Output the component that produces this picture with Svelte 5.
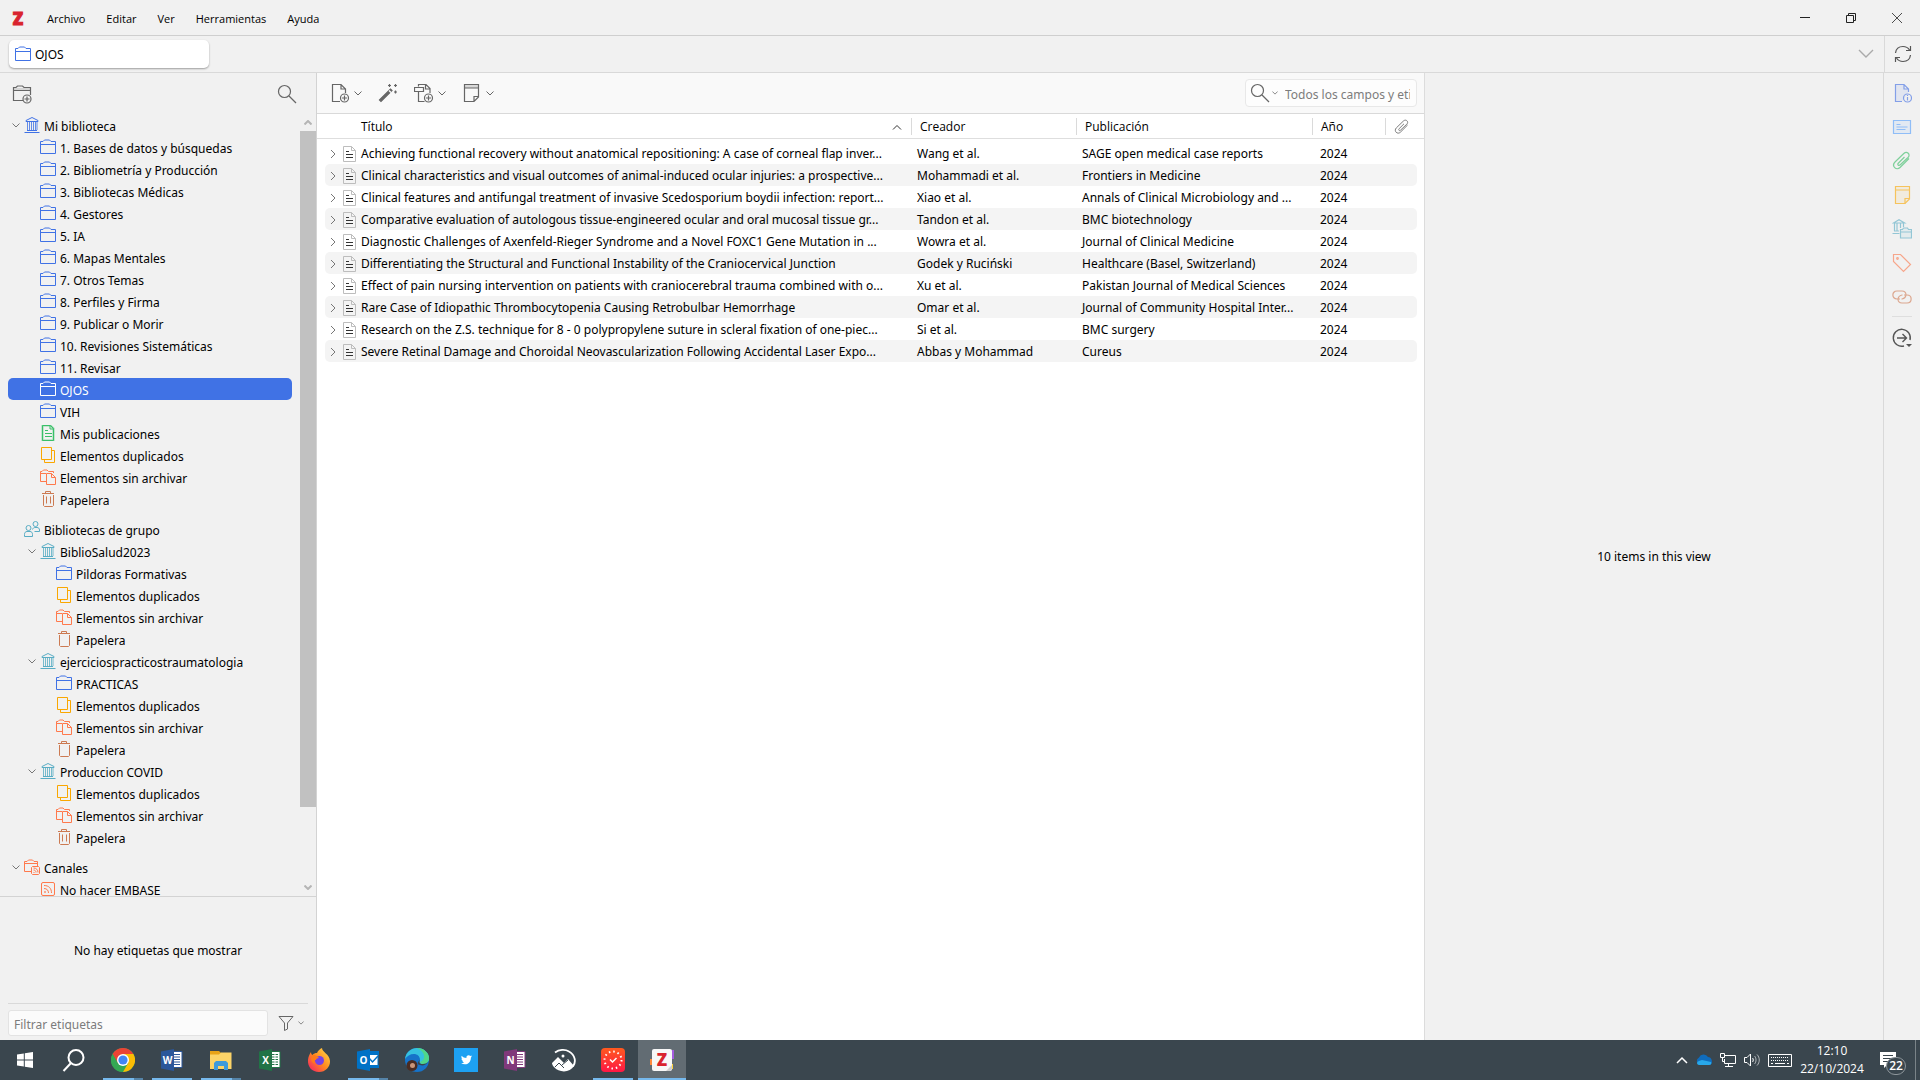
<script>
  const menus = ['Archivo', 'Editar', 'Ver', 'Herramientas', 'Ayuda'];

  const folder = (label, level = 1) => ({ label, level, icon: 'folder' });
  const extras = (level, trash = 'trash') => [
    { label: 'Elementos duplicados', level, icon: 'duplicates' },
    { label: 'Elementos sin archivar', level, icon: 'unfiled' },
    { label: 'Papelera', level, icon: trash },
  ];

  const tree = [
    { label: 'Mi biblioteca', level: 0, icon: 'library', tone: 'blue', open: true },
    folder('1. Bases de datos y búsquedas'),
    folder('2. Bibliometría y Producción'),
    folder('3. Bibliotecas Médicas'),
    folder('4. Gestores'),
    folder('5. IA'),
    folder('6. Mapas Mentales'),
    folder('7. Otros Temas'),
    folder('8. Perfiles y Firma'),
    folder('9. Publicar o Morir'),
    folder('10. Revisiones Sistemáticas'),
    folder('11. Revisar'),
    folder('OJOS'),
    folder('VIH'),
    { label: 'Mis publicaciones', level: 1, icon: 'publications' },
    ...extras(1, 'trash-full'),
    { label: 'Bibliotecas de grupo', level: 0, icon: 'groups', spaced: true },
    { label: 'BiblioSalud2023', level: 1, icon: 'library', open: true },
    folder('Pildoras Formativas', 2),
    ...extras(2),
    { label: 'ejerciciospracticostraumatologia', level: 1, icon: 'library', open: true },
    folder('PRACTICAS', 2),
    ...extras(2),
    { label: 'Produccion COVID', level: 1, icon: 'library', open: true },
    ...extras(2, 'trash-full'),
    { label: 'Canales', level: 0, icon: 'feeds', open: true, spaced: true },
    { label: 'No hacer EMBASE', level: 1, icon: 'feed' },
  ];

  const items = [
    ['Achieving functional recovery without anatomical repositioning: A case of corneal flap inver...', 'Wang et al.', 'SAGE open medical case reports', '2024'],
    ['Clinical characteristics and visual outcomes of animal-induced ocular injuries: a prospective...', 'Mohammadi et al.', 'Frontiers in Medicine', '2024'],
    ['Clinical features and antifungal treatment of invasive Scedosporium boydii infection: report...', 'Xiao et al.', 'Annals of Clinical Microbiology and ...', '2024'],
    ['Comparative evaluation of autologous tissue-engineered ocular and oral mucosal tissue gr...', 'Tandon et al.', 'BMC biotechnology', '2024'],
    ['Diagnostic Challenges of Axenfeld-Rieger Syndrome and a Novel FOXC1 Gene Mutation in ...', 'Wowra et al.', 'Journal of Clinical Medicine', '2024'],
    ['Differentiating the Structural and Functional Instability of the Craniocervical Junction', 'Godek y Ruciński', 'Healthcare (Basel, Switzerland)', '2024'],
    ['Effect of pain nursing intervention on patients with craniocerebral trauma combined with o...', 'Xu et al.', 'Pakistan Journal of Medical Sciences', '2024'],
    ['Rare Case of Idiopathic Thrombocytopenia Causing Retrobulbar Hemorrhage', 'Omar et al.', 'Journal of Community Hospital Inter...', '2024'],
    ['Research on the Z.S. technique for 8 - 0 polypropylene suture in scleral fixation of one-piec...', 'Si et al.', 'BMC surgery', '2024'],
    ['Severe Retinal Damage and Choroidal Neovascularization Following Accidental Laser Expo...', 'Abbas y Mohammad', 'Cureus', '2024'],
  ];

  const sections = ['info', 'abstract', 'attachments', 'notes', 'collections', 'tags', 'related'];

  const apps = [
    { name: 'start' },
    { name: 'search' },
    { name: 'chrome', state: 'stacked' },
    { name: 'word', state: 'running' },
    { name: 'explorer', state: 'stacked' },
    { name: 'excel' },
    { name: 'firefox' },
    { name: 'outlook', state: 'stacked' },
    { name: 'edge' },
    { name: 'twitter' },
    { name: 'onenote' },
    { name: 'photos' },
    { name: 'timer', state: 'running' },
    { name: 'zotero', state: 'active' },
  ];

  let selected = $state('OJOS');
  let quickSearch = $state('');
  let tagFilter = $state('');
</script>

{#snippet chevron(w = 8, h = 5)}
  <svg width={w} height={h} viewBox="0 0 8 5" fill="none" stroke="currentColor">
    <path d="M.5.5 4 4 7.5.5" />
  </svg>
{/snippet}

{#snippet treeIcon(name)}
  <svg class="tree-icon {name}" width="16" height="16" viewBox="0 0 16 16" fill="none" stroke="currentColor">
    {#if name === 'folder'}
      <path d="M.5 14.5v-12H3L4.500 1h5L11 2.500h4.500v12zM.5 5.500h15" />
    {:else if name === 'library'}
      <path d="M2 4.500v-1L8 .5l6 3v1zM3 13.500h10M.5 15.500h15" />
      <path d="M3.500 5v8M5.500 5v8M7.500 5v8M9.500 5v8M11.500 5v8M13 5v8" stroke-width=".8" />
    {:else if name === 'publications'}
      <path d="M2.500.5h8l3 3v12h-11z" stroke-width="2" opacity=".5" />
      <path d="M2.500.5h8l3 3v12h-11zM10 .5V4h3.500M5 5.500h3M5 8.500h7M5 11.500h7" />
    {:else if name === 'duplicates'}
      <path d="M1.500.5h10v12h-10zM11.500 3.500h3v12h-10v-3" />
    {:else if name === 'unfiled'}
      <path d="M6 12.500H.5v-10H2L3.500 1H7l1.500 1.500h5V4M.5 4.500H6M6.500 4.500h5l4 4v7h-9zM11.500 4.500v4h4" />
    {:else if name === 'trash' || name === 'trash-full'}
      <path d="M2 2.500h12M5.500 2.500v-2h5v2M3.500 4v10.500l1 1h8l1-1V4" />
      {#if name === 'trash-full'}<path d="M6.500 5.500v7M10.500 5.500v7" />{/if}
    {:else if name === 'groups'}
      <circle cx="11.500" cy="3" r="2.500" />
      <circle cx="4.500" cy="7" r="2.500" />
      <path d="M.5 15.500v-2c0-2 1-3 2.500-3h3c1.500 0 2.500 1 2.500 3v2zM8.500 8.500C9 7 10 6.500 11 6.500h2c1.500 0 2.500 1 2.500 2.500v1.500h-5" />
    {:else if name === 'feeds'}
      <path d="M7 12.500H.5v-10H3L4.500 1h4L10 2.500h3.500V7M.5 4.500h13M8.500 7.500h6l1 1v6l-1 1h-6l-1-1v-6z" />
      <path d="M9.500 11c1.500 0 2.500 1 2.500 2.500M9.500 9c3 0 4.500 2 4.500 4.500M9.500 13.500h1" />
    {:else if name === 'feed'}
      <rect x="1.500" y="1.500" width="13" height="13" rx="1.500" />
      <path d="M4 7.500c3 0 4.500 2 4.500 4.500M4 4.500c5 0 7.500 3 7.500 7.500" />
      <circle cx="5" cy="11" r=".5" />
    {/if}
  </svg>
{/snippet}

{#snippet toolIcon(name)}
  <svg width="20" height="20" viewBox="0 0 20 20" fill="none" stroke="currentColor" stroke-width="1.200">
    {#if name === 'new-collection'}
      <path d="M2 4h16v2H2z" fill="#d5d5d5" stroke="none" />
      <path d="M11 16.500H1.500V3.500h2.500L5.500 2h5L12 3.500h6.500V11M1.500 6.500h17" />
      <circle cx="15" cy="15" r="4" />
      <path d="M15 12.500v5M12.500 15h5" />
    {:else if name === 'search'}
      <circle cx="7.500" cy="7.500" r="6" />
      <path d="m12 12 7 7" />
    {:else if name === 'new-item'}
      <path d="M10 18.500H2.500v-17h8.500l4.500 4.500V10M11 1.500V6h4.500" />
      <circle cx="14.500" cy="15" r="4" />
      <path d="M14.500 12.500v5M12 15h5" />
    {:else if name === 'wand'}
      <path d="m1.500 17 11-11 1.500 1.500-11 11z" fill="currentColor" />
      <path d="m11 7.500 2 2" stroke="#fff" />
      <path d="M11.500 1v3M10 2.500h3M17.500 1v3M16 2.500h3M17.500 7.500v3M16 9h3" />
    {:else if name === 'attach'}
      <path d="M10.500 18.500H4.500V9M4.500 3.500v-2H12l4 4V10M11.500 1.500V6H16M.5 4.500h9v4h-9z" />
      <circle cx="14.500" cy="15" r="4" />
      <path d="M14.500 12.500v5M12 15h5" />
    {:else if name === 'note'}
      <path d="M2.500 2h14v3h-14z" fill="#d8d8d8" stroke="none" />
      <path d="M2.500 1.500h14V14l-4.500 4.500H2.500zM2.500 5h14M16.500 13.500h-4.500v5" />
    {/if}
  </svg>
{/snippet}

{#snippet paneIcon(name)}
  <svg class="pane-icon {name}" width="20" height="20" viewBox="0 0 20 20" fill="none" stroke="currentColor" stroke-width="1.200">
    {#if name === 'info'}
      <path d="M10 18.500H3.500v-17H12l4.500 4.500v3M12 1.500V6h4.500" fill="currentColor" fill-opacity=".15" />
      <circle cx="15.500" cy="15" r="4" />
      <path d="M15.500 14v3.500M15.500 12v1" />
    {:else if name === 'abstract'}
      <path d="M1.500 3.500h17v13h-17z" fill="currentColor" fill-opacity=".15" />
      <path d="M4.500 7.500h4M4.500 10h11M4.500 12.500h9" />
    {:else if name === 'attachments'}
      <path d="m12.500 6-6 6c-1.500 1.500 0 3.500 1.800 1.800L16 6.500c3-3-1-7-4.200-4L3 11c-4 4 1.500 9 5 5.500l9-9" />
    {:else if name === 'notes'}
      <path d="M3.500 1.500h14V14L13 18.500H3.500z" fill="currentColor" fill-opacity=".12" />
      <path d="M3.500 5h14M17.500 13.500H13v5" />
    {:else if name === 'collections'}
      <path d="M1.500 4 7 .8 12.500 4zM.5 14.500h7M2.500 4.500V12M5 4.500V12M8.500 4.500V9M11.500 4.500V8M2 12h5" />
      <path d="M8.500 19V10.500h2l1-1.500h4l1 1.500h3V19zM8.500 13h11" fill="currentColor" fill-opacity=".15" />
    {:else if name === 'tags'}
      <path d="M1.500 1.500h7l10 10-7 7-10-10z" />
      <circle cx="5.500" cy="5.500" r=".8" />
    {:else if name === 'related'}
      <path d="M8 12H5C-.5 12-.5 4 5 4h5c5.500 0 5 7 0 8H9.500" />
      <path d="M12 8h3c5.500 0 5.500 8 0 8h-5c-5.500 0-5-7 0-8h.5" />
    {/if}
  </svg>
{/snippet}

{#snippet officeIcon(letter, color)}
  <svg width="24" height="24" viewBox="0 0 24 24">
    <path d="M12 3.500h10v16H12z" fill="#fff" stroke={color} />
    {#if letter === 'O'}
      <path d="M12 3h11v4H12zM12 17h11v3H12z" fill="#0072c6" />
      <path d="m13 10 3.500 4L22 8" fill="none" stroke={color} stroke-width="1.500" />
    {:else}
      <path d="M14 6.500h6M14 9h6M14 11.500h6M14 14h6M14 16.500h6" stroke={color} />
      {#if letter === 'X'}<path d="M17 5v13" stroke="#fff" />{/if}
    {/if}
    <path d="M1 3.500 14 1v22L1 20.500z" fill={color} />
    <text x="7.500" y="16" text-anchor="middle" class="office-letter">{letter}</text>
  </svg>
{/snippet}

{#snippet appIcon(name)}
  {#if name === 'start'}
    <svg width="18" height="18" viewBox="0 0 18 18" fill="#fff">
      <path d="M1 3.500 7.800 2.500v6H1zM8.800 2.300 17 1v7.500H8.800zM1 9.500h6.800v6L1 14.500zM8.800 9.500H17V17l-8.200-1.200z" />
    </svg>
  {:else if name === 'search'}
    <svg width="24" height="24" viewBox="0 0 24 24" fill="none" stroke="#fff" stroke-width="2">
      <circle cx="14" cy="9.500" r="7.500" />
      <path d="M9 15 1.500 23" />
    </svg>
  {:else if name === 'chrome'}
    <svg width="24" height="24" viewBox="0 0 24 24">
      <circle cx="12" cy="12" r="12" fill="#34a853" />
      <path d="M1.600 6a12 12 0 0 1 20.800 0H12v6z" fill="#ea4335" />
      <path d="M22.400 6A12 12 0 0 1 12 24l5.200-9L12 6z" fill="#fbbc05" />
      <path d="m1.600 6 5.200 9L12 12V6z" fill="#ea4335" />
      <path d="m1.600 6 5.200 9 5.200 9A12 12 0 0 1 1.600 6z" fill="#34a853" />
      <circle cx="12" cy="12" r="6" fill="#fff" />
      <circle cx="12" cy="12" r="4.600" fill="#4285f4" />
    </svg>
  {:else if name === 'word'}
    {@render officeIcon('W', '#2b579a')}
  {:else if name === 'excel'}
    {@render officeIcon('X', '#217346')}
  {:else if name === 'outlook'}
    {@render officeIcon('O', '#0072c6')}
  {:else if name === 'onenote'}
    {@render officeIcon('N', '#80397b')}
  {:else if name === 'explorer'}
    <svg width="24" height="24" viewBox="0 0 24 24">
      <path d="M1 3h9l2 2h10v4H1z" fill="#e8a317" />
      <path d="M1 6.500h9l2-2h10.500V21H1z" fill="#fcd468" />
      <path d="M5 22v-7l2-2h10l2 2v7h-4v-4H9v4z" fill="#3f9bdb" />
    </svg>
  {:else if name === 'firefox'}
    <svg width="24" height="24" viewBox="0 0 24 24">
      <defs>
        <linearGradient id="fox-fill" x1="1" y1="0" x2="0" y2="1">
          <stop offset="0" stop-color="#ffe14d" />
          <stop offset=".5" stop-color="#ff8a1f" />
          <stop offset="1" stop-color="#f5156c" />
        </linearGradient>
      </defs>
      <path d="M12 24C5 24 .5 19 1 12c.2-3 1.500-6 3-8 0 1.500.5 2.500 1.500 3 1-1.500 3-2 4.500-2 1-2.500 3-4 5-5 0 4 7.500 6 8 13 .3 6-4.500 11-11 11z" fill="url(#fox-fill)" />
      <circle cx="12.500" cy="12.500" r="4.500" fill="#7542e5" />
      <path d="M5.500 7c2 0 5 .5 6.500 3-2 0-3 1-3 2-2 0-3 2 0 4-5-1-6-5-3.500-9z" fill="#ff7a1a" />
    </svg>
  {:else if name === 'edge'}
    <svg width="24" height="24" viewBox="0 0 24 24">
      <circle cx="12" cy="12" r="12" fill="#1673c9" />
      <path d="M0 11C1 4 6 0 12 0c7 0 12 5 12 10 0 4-3 6-6 6-4 0-4-2-3-4 0-4-3-6-6-6C5 6 2 8 0 11z" fill="#35c1e0" />
      <path d="M12 0c7 0 12 5 12 10 0 4-3 6-6 6-2 0-3-1-3-2 6-2 6-10-3-14z" fill="#4fd68a" />
      <path d="M15 12c-1 2-1 4 3 4 2 0 4-1 5-2-2 3-5 4-8 3-3 0-3-3 0-5z" fill="#3a464e" />
      <circle cx="7" cy="17.500" r="5.500" fill="#4a2c22" />
      <circle cx="7.500" cy="17.500" r="2.500" fill="#c99478" />
    </svg>
  {:else if name === 'twitter'}
    <svg width="24" height="24" viewBox="0 0 24 24">
      <path d="M0 0h24v24H0z" fill="#1da1f2" />
      <path d="M18 8.200c-.4.200-.8.300-1.300.4.500-.3.800-.7 1-1.200-.5.300-1 .4-1.400.5a2.300 2.300 0 0 0-3.900 2.100C10.500 10 8.900 9 7.700 7.700c-.7 1.200-.2 2.400.7 3-.4 0-.7-.1-1-.3 0 1.200.8 2 1.800 2.300h-1c.3.900 1.100 1.500 2.100 1.600-1 .8-2.200 1-3.300.9C12 18.200 17 15 16.900 9.400c.4-.3.800-.7 1.100-1.200z" fill="#fff" />
    </svg>
  {:else if name === 'photos'}
    <svg width="24" height="24" viewBox="0 0 24 24" fill="none" stroke="#fff" stroke-width="1.800">
      <path d="M3 4.500c4-3 10-3.500 14-1 6 3.500 7.500 10 4 15" />
      <path d="m0 15 6-6 6 6 4-4 6 7c-4 7-15 7-20 1-1-1-2-2.500-2-4z" fill="#fff" stroke="none" />
      <path d="m3 19 4-4 5 5M10 17l6-5" stroke="#3a464e" stroke-width="1" />
      <circle cx="11" cy="8" r="1.500" fill="#fff" stroke="none" />
    </svg>
  {:else if name === 'timer'}
    <svg width="24" height="24" viewBox="0 0 24 24" fill="none" stroke="#fff" stroke-width="1.500">
      <defs>
        <linearGradient id="timer-fill" x1="0" y1="0" x2="0" y2="1">
          <stop offset="0" stop-color="#ff5a1f" />
          <stop offset="1" stop-color="#ff1745" />
        </linearGradient>
      </defs>
      <rect width="24" height="24" rx="4" fill="url(#timer-fill)" stroke="none" />
      <circle cx="12" cy="12" r="8.500" stroke-width="2" stroke-dasharray="1.500 2.950" />
      <path d="m9 11.500 2.500 2.500 4-4" />
    </svg>
  {:else if name === 'zotero'}
    <svg width="24" height="24" viewBox="0 0 24 24">
      <path d="M20 2h4v9h-4z" fill="#a45be0" />
      <path d="M20 16h3v5h-3z" fill="#ffd43b" />
      <path d="M0 11h4v6H0z" fill="#ff8a3d" />
      <rect x="2" y="1" width="20" height="22" rx="2" fill="#f7f7f7" />
      <path d="m16 23 6-6v4l-2 2z" fill="#cfcfcf" />
      <text x="12" y="18" text-anchor="middle" class="zotero-letter">Z</text>
    </svg>
  {/if}
{/snippet}

<div class="screen">
  <header class="menubar">
    <svg class="logo" width="20" height="24" viewBox="0 0 20 24">
      <text x="10" y="19" text-anchor="middle">Z</text>
    </svg>
    <nav class="menus">
      {#each menus as menu}
        <button>{menu}</button>
      {/each}
    </nav>
    <div class="window-controls">
      <button aria-label="Minimizar">
        <svg width="12" height="12" viewBox="0 0 12 12" stroke="#222"><path d="M1 5.500h10" /></svg>
      </button>
      <button aria-label="Restaurar">
        <svg width="12" height="12" viewBox="0 0 12 12" fill="none" stroke="#222"><path d="M1.500 3.500h7v7h-7zM3.500 3.500v-2h7v7h-2" /></svg>
      </button>
      <button aria-label="Cerrar">
        <svg width="12" height="12" viewBox="0 0 12 12" stroke="#222" stroke-width=".8"><path d="m1 1 10 10M11 1 1 11" /></svg>
      </button>
    </div>
  </header>

  <div class="tabbar">
    <button class="tab">
      {@render treeIcon('folder')}
      <span>OJOS</span>
    </button>
    <button class="tab-list" aria-label="Lista de pestañas">{@render chevron(16, 10)}</button>
    <button class="sync" aria-label="Sincronizar">
      <svg width="20" height="20" viewBox="0 0 20 20" fill="none" stroke="#555" stroke-width="1.200">
        <path d="M2.500 9C3 5 6 2.500 10 2.500c3 0 5 1.200 6.500 3.500M17.500 2v4.500H13M17.500 11c-.5 4-3.500 6.500-7.500 6.500-3 0-5-1.200-6.500-3.500M2.500 18v-4.500H7" />
      </svg>
    </button>
  </div>

  <main class="panes">
    <aside class="sidebar">
      <div class="side-toolbar">
        <button aria-label="Nueva colección">{@render toolIcon('new-collection')}</button>
        <button aria-label="Filtrar colecciones">{@render toolIcon('search')}</button>
      </div>

      <div class="collections">
        <div class="tree">
          {#each tree as row}
            <button
              class="tree-row"
              class:selected={row.label === selected}
              class:spaced={row.spaced}
              class:blue={row.tone === 'blue'}
              style="padding-left: {row.level * 16}px"
              onclick={() => (selected = row.label)}
            >
              <span class="twisty">{#if row.open}{@render chevron()}{/if}</span>
              {@render treeIcon(row.icon)}
              <span class="label">{row.label}</span>
            </button>
          {/each}
        </div>
        <div class="scrollbar">
          <span class="arrow up">{@render chevron(8, 5)}</span>
          <div class="track"><div class="thumb"></div></div>
          <span class="arrow">{@render chevron(8, 5)}</span>
        </div>
      </div>

      <section class="tag-selector">
        <p>No hay etiquetas que mostrar</p>
        <div class="tag-filter">
          <input type="text" placeholder="Filtrar etiquetas" aria-label="Filtrar etiquetas" bind:value={tagFilter} />
          <button aria-label="Opciones de etiquetas">
            <svg width="16" height="16" viewBox="0 0 16 16" fill="none" stroke="currentColor">
              <path d="M1 1.500h14L9.500 8v6l-3 1.500V8z" />
            </svg>
            {@render chevron(6, 4)}
          </button>
        </div>
      </section>
    </aside>

    <section class="items">
      <div class="items-toolbar">
        <button aria-label="Nuevo elemento">{@render toolIcon('new-item')}{@render chevron()}</button>
        <button aria-label="Añadir por identificador">{@render toolIcon('wand')}</button>
        <button aria-label="Añadir adjunto">{@render toolIcon('attach')}{@render chevron()}</button>
        <button aria-label="Nueva nota">{@render toolIcon('note')}{@render chevron()}</button>
        <label class="quick-search">
          {@render toolIcon('search')}
          {@render chevron(6, 4)}
          <input type="text" placeholder="Todos los campos y etiquetas" bind:value={quickSearch} />
        </label>
      </div>

      <div class="table-wrap">
        <table>
          <colgroup>
            <col />
            <col class="col-creator" />
            <col class="col-publication" />
            <col class="col-year" />
            <col class="col-attachment" />
          </colgroup>
          <thead>
            <tr>
              <th>
                <div class="sorted">
                  <span>Título</span>
                  <svg width="10" height="6" viewBox="0 0 10 6" fill="none" stroke="#333"><path d="m1 5.500 4-4 4 4" /></svg>
                </div>
              </th>
              <th>Creador</th>
              <th>Publicación</th>
              <th>Año</th>
              <th aria-label="Adjuntos">
                <svg class="clip" width="16" height="16" viewBox="0 0 20 20" fill="none" stroke="#777" stroke-width="1.200">
                  <path d="m12.500 6-6 6c-1.500 1.500 0 3.500 1.800 1.800L16 6.500c3-3-1-7-4.200-4L3 11c-4 4 1.500 9 5 5.500l9-9" />
                </svg>
              </th>
            </tr>
          </thead>
          <tbody>
            {#each items as [title, creator, publication, year]}
              <tr>
                <td>
                  <div class="title">
                    <svg width="6" height="10" viewBox="0 0 6 10" fill="none" stroke="#777"><path d="m1 1 4 4-4 4" /></svg>
                    <svg width="14" height="16" viewBox="0 0 14 16" fill="none">
                      <path d="M.5.5h8l4 4v11H.5zM8.500.5v4h4" stroke="#bdbdbd" />
                      <path d="M3 5.500h3M3 8.500h7M3 11.500h7" stroke="#333" />
                    </svg>
                    <span>{title}</span>
                  </div>
                </td>
                <td>{creator}</td>
                <td>{publication}</td>
                <td>{year}</td>
                <td></td>
              </tr>
            {/each}
          </tbody>
        </table>
      </div>
    </section>

    <section class="item-pane">
      <p>10 items in this view</p>
    </section>

    <nav class="sidenav">
      {#each sections as name}
        <button aria-label={name}>{@render paneIcon(name)}</button>
      {/each}
      <hr />
      <button aria-label="Localizar">
        <svg width="20" height="20" viewBox="0 0 20 20" fill="none" stroke="#555" stroke-width="1.400">
          <path d="M12 18A8.500 8.500 0 1 1 18 12M5 10h9M10.500 6l4 4-4 4" />
          <path d="M14 16h6l-3 3z" fill="#555" stroke="none" />
        </svg>
      </button>
    </nav>
  </main>

  <footer class="taskbar">
    {#each apps as app}
      <button class="app {app.state ?? ''}" aria-label={app.name}>{@render appIcon(app.name)}</button>
    {/each}

    <div class="tray">
      <svg width="12" height="8" viewBox="0 0 12 8" fill="none" stroke="#fff" stroke-width="1.500"><path d="m1 7 5-5 5 5" /></svg>
      <svg width="16" height="16" viewBox="0 0 16 16">
        <path d="M4 13a4 4 0 0 1-1-7.500A5 5 0 0 1 12 5c3 0 4 3 4 4.500S15 13 13 13z" fill="#0f6cbd" />
        <path d="M3 13c-2 0-3-3 0-4l3-1 9 2c1 1 0 3-2 3z" fill="#28a8ea" />
      </svg>
      <svg width="16" height="16" viewBox="0 0 16 16" fill="none" stroke="#fff">
        <path d="M5 3.500h10.500v8H4.500V7M8.500 11.500v3M5 14.500h8M.5 1.500h4v4h-4zM2.500 5.500v4H5" />
      </svg>
      <svg width="16" height="16" viewBox="0 0 16 16" fill="none" stroke="#fff">
        <path d="M.5 5.500H3L6.500 2v12L3 10.500H.5zM8.500 6c1 1 1 3 0 4" />
        <path d="M10.500 4c2 2 2 6 0 8M13 2.500c3 3 3 8 0 11" opacity=".6" />
      </svg>
      <svg width="24" height="16" viewBox="0 0 24 16" fill="none" stroke="#fff">
        <path d="M.5 2.500h23v12H.5z" />
        <path d="M3 5.500h18M3 8.500h18" stroke-dasharray="1 1" />
        <path d="M3 11.500h2M7 11.500h10M19 11.500h2" />
      </svg>
      <time class="clock"><span>12:10</span><span>22/10/2024</span></time>
      <div class="notifications">
        <svg width="16" height="16" viewBox="0 0 16 16">
          <path d="M0 0h16v13H7l-3 3v-3H0z" fill="#fff" />
          <path d="M3 3.500h10M3 6.500h10M3 9.500h6" stroke="#3a464e" />
        </svg>
        <span class="badge">22</span>
      </div>
      <div class="show-desktop"></div>
    </div>
  </footer>
</div>

<style>
  :global(body) {
    background: #f1f1f1;
  }

  .screen {
    display: flex;
    flex-direction: column;
    height: 100vh;
    overflow: hidden;
    font-family: "Noto Sans", "Open Sans", sans-serif;
    font-size: 12px;
    line-height: 16px;
    color: #000;
    background: #f1f1f1;
  }

  button {
    display: flex;
    align-items: center;
    margin: 0;
    padding: 0;
    border: 0;
    background: none;
    font: inherit;
    color: inherit;
    text-align: left;
    white-space: nowrap;
  }

  input {
    min-width: 0;
    margin: 0;
    font: inherit;
    outline: none;
  }

  input::placeholder {
    color: #7c7c7c;
    opacity: 1;
  }

  svg {
    flex: none;
  }

  p {
    margin: 0;
  }

  /* title and tabs */
  .menubar {
    display: flex;
    align-items: center;
    height: 35px;
    flex: none;
    padding-left: 8px;
    border-bottom: 1px solid #cfcfcf;
  }

  .logo text {
    font: 800 17px "Open Sans", sans-serif;
    fill: #d9232e;
    stroke: #d9232e;
  }

  .menus {
    display: flex;
    gap: 21px;
    margin-left: 19px;
    padding-top: 2px;
    font-family: "Open Sans", sans-serif;
    font-size: 11px;
  }

  .window-controls {
    display: flex;
    margin-left: auto;
  }

  .window-controls button {
    justify-content: center;
    width: 46px;
    height: 35px;
  }

  .tabbar {
    display: flex;
    align-items: center;
    height: 36px;
    flex: none;
    padding-left: 9px;
    border-bottom: 1px solid #d9d9d9;
  }

  .tab {
    gap: 4px;
    width: 200px;
    height: 28px;
    padding-left: 6px;
    border-radius: 5px;
    background: #fff;
    box-shadow: 0 1px 2px rgba(0, 0, 0, 0.35);
  }

  .tab span {
    padding-top: 2px;
  }

  .tab-list {
    margin-left: auto;
    margin-right: 10px;
    color: #aaa;
  }

  .tab-list :global(svg) {
    stroke-width: 0.7px;
  }

  .sync {
    justify-content: center;
    width: 36px;
    height: 36px;
    border-left: 1px solid #d9d9d9;
  }

  .panes {
    display: flex;
    flex: 1;
    min-height: 0;
  }

  /* collections */
  .sidebar {
    display: flex;
    flex-direction: column;
    width: 316px;
    flex: none;
    border-right: 1px solid #d3d3d3;
  }

  .side-toolbar {
    display: flex;
    justify-content: space-between;
    align-items: center;
    height: 41px;
    flex: none;
    padding: 0 19px 0 12px;
    color: #666;
  }

  .collections {
    display: flex;
    flex: 1;
    min-height: 0;
  }

  .tree {
    flex: 1;
    min-width: 0;
    overflow: hidden;
    padding: 0 8px;
  }

  .tree-row {
    width: 100%;
    height: 22px;
    border-radius: 5px;
  }

  .tree-row.spaced {
    margin-top: 8px;
  }

  .tree-row.selected {
    background: #4072e5;
    color: #fff;
  }

  .twisty {
    display: flex;
    justify-content: center;
    width: 16px;
    color: #777;
  }

  .label {
    margin-left: 4px;
    padding-top: 3px;
  }

  .tree-icon.folder { color: #4072e5; }
  .tree-icon.library { color: #59adc4; }
  .tree-icon.publications { color: #39bf68; }
  .tree-icon.duplicates { color: #faa700; }
  .tree-icon.unfiled { color: #ff794c; }
  .tree-icon.trash { color: #cc7a52; }
  .tree-icon.trash-full { color: #cc7a52; }
  .tree-icon.groups { color: #59adc4; }
  .tree-icon.feeds { color: #ff794c; }
  .tree-icon.feed { color: #ff794c; }
  .blue .tree-icon { color: #4072e5; }
  .selected .tree-icon { color: #fff; }

  .scrollbar {
    display: flex;
    flex-direction: column;
    width: 16px;
    flex: none;
    color: #b5b5b5;
  }

  .arrow {
    display: flex;
    align-items: center;
    justify-content: center;
    height: 17px;
  }

  .arrow svg {
    stroke-width: 2px;
  }

  .arrow.up {
    transform: rotate(180deg);
  }

  .track {
    flex: 1;
  }

  .thumb {
    height: 90.4%;
    background: #c1c1c1;
  }

  .tag-selector {
    display: flex;
    flex-direction: column;
    height: 143px;
    flex: none;
    border-top: 1px solid #d3d3d3;
  }

  .tag-selector p {
    display: flex;
    flex: 1;
    align-items: center;
    justify-content: center;
    padding-top: 2px;
  }

  .tag-filter {
    display: flex;
    align-items: center;
    gap: 10px;
    margin: 0 8px;
    padding: 6px 0 4px;
    border-top: 1px solid #d9d9d9;
  }

  .tag-filter input {
    width: 260px;
    height: 26px;
    box-sizing: border-box;
    padding: 2px 5px 0;
    border: 1px solid #e3e3e3;
    border-radius: 3px;
    background: #fbfbfb;
  }

  .tag-filter button {
    gap: 4px;
    color: #666;
  }

  /* item list */
  .items {
    display: flex;
    flex-direction: column;
    flex: 1;
    min-width: 0;
    background: #fff;
    border-right: 1px solid #dcdcdc;
  }

  .items-toolbar {
    display: flex;
    align-items: center;
    gap: 16px;
    height: 40px;
    flex: none;
    padding: 0 7px 0 13px;
    border-bottom: 1px solid #d9d9d9;
    background: #f9f9f9;
    color: #666;
  }

  .items-toolbar button {
    gap: 4px;
  }

  .quick-search {
    display: flex;
    align-items: center;
    gap: 2px;
    width: 172px;
    height: 28px;
    box-sizing: border-box;
    margin-left: auto;
    padding: 0 6px 0 4px;
    border: 1px solid #e8e8e8;
    border-radius: 4px;
    background: #fdfdfd;
  }

  .quick-search input {
    flex: 1;
    margin-left: 5px;
    padding: 3px 0 0;
    border: 0;
    background: none;
  }

  /* the line under the headings runs past the rows to both edges */
  .table-wrap {
    flex: 1;
    padding: 0 7px 0 8px;
    background: linear-gradient(#dedede, #dedede) 0 24px / 100% 1px no-repeat;
  }

  table {
    width: 100%;
    table-layout: fixed;
    border-collapse: separate;
    border-spacing: 0;
  }

  .col-creator { width: 165px; }
  .col-publication { width: 236px; }
  .col-year { width: 73px; }
  .col-attachment { width: 32px; }

  th {
    height: 25px;
    padding: 0 0 0 9px;
    font-family: "Open Sans", sans-serif;
    font-weight: 400;
    text-align: left;
    background: linear-gradient(#dadada, #dadada) left center / 1px 17px no-repeat;
  }

  th:first-child {
    padding-left: 36px;
    background: none;
  }

  .sorted {
    display: flex;
    align-items: center;
    justify-content: space-between;
    padding-right: 9px;
  }

  .clip {
    display: block;
  }

  tbody::before {
    content: "";
    display: block;
    height: 3px;
  }

  td {
    height: 20px;
    padding: 2px 0 0 6px;
    white-space: nowrap;
  }

  td:nth-child(4) {
    padding-left: 8px;
  }

  td:first-child {
    padding-left: 5px;
    border-radius: 5px 0 0 5px;
  }

  td:last-child {
    border-radius: 0 5px 5px 0;
  }

  tbody tr:nth-child(even) td {
    background: #f4f4f4;
  }

  .title {
    display: flex;
    align-items: center;
  }

  .title svg + svg {
    margin: 0 4px 0 7px;
  }

  /* right side */
  .item-pane {
    display: flex;
    align-items: center;
    justify-content: center;
    width: 458px;
    flex: none;
  }

  .sidenav {
    display: flex;
    flex-direction: column;
    align-items: center;
    gap: 14px;
    width: 36px;
    flex: none;
    padding-top: 10px;
    border-left: 1px solid #d9d9d9;
  }

  .sidenav hr {
    width: 20px;
    margin: -5px 0 -3px;
    border: 0;
    border-top: 1px solid #dedede;
  }

  .pane-icon.info { color: #839fe8; }
  .pane-icon.abstract { color: #8fbdf7; }
  .pane-icon.attachments { color: #7fd09b; }
  .pane-icon.notes { color: #f6c35c; }
  .pane-icon.collections { color: #93c6d5; }
  .pane-icon.tags { color: #f7a68b; }
  .pane-icon.related { color: #dca78f; }

  /* taskbar */
  .taskbar {
    display: flex;
    gap: 1px;
    height: 40px;
    flex: none;
    padding-left: 1px;
    background: #3a464e;
    color: #fff;
  }

  .app {
    justify-content: center;
    width: 48px;
    height: 40px;
    box-sizing: border-box;
    padding-top: 2px;
    border-bottom: 2px solid transparent;
  }

  .app.running,
  .app.stacked {
    background: linear-gradient(#76b9ed, #76b9ed) center bottom / 40px 2px no-repeat border-box;
  }

  .app.stacked {
    background: linear-gradient(90deg, #76b9ed 31px, #5584a8 31px) center bottom / 40px 2px no-repeat border-box;
  }

  .app.active {
    background: #626c73;
    border-bottom-color: #76b9ed;
  }

  .office-letter {
    font: 700 10px "Open Sans", sans-serif;
    fill: #fff;
  }

  .zotero-letter {
    font: 800 17px "Open Sans", sans-serif;
    fill: #d9232e;
  }

  .tray {
    display: flex;
    align-items: center;
    gap: 8px;
    margin-left: auto;
    font-family: "Open Sans", sans-serif;
  }

  .clock {
    display: flex;
    flex-direction: column;
    align-items: center;
    gap: 2px;
    width: 64px;
  }

  .notifications {
    position: relative;
    display: flex;
    margin: 0 11px 0 8px;
  }

  .badge {
    position: absolute;
    top: 5px;
    left: 6px;
    width: 18px;
    height: 16px;
    border: 1px solid #8d959a;
    border-radius: 9px;
    background: #3a464e;
    font-size: 12px;
    font-weight: 600;
    text-align: center;
  }

  .show-desktop {
    width: 4px;
    height: 40px;
    border-left: 1px solid #7a8388;
  }
</style>
